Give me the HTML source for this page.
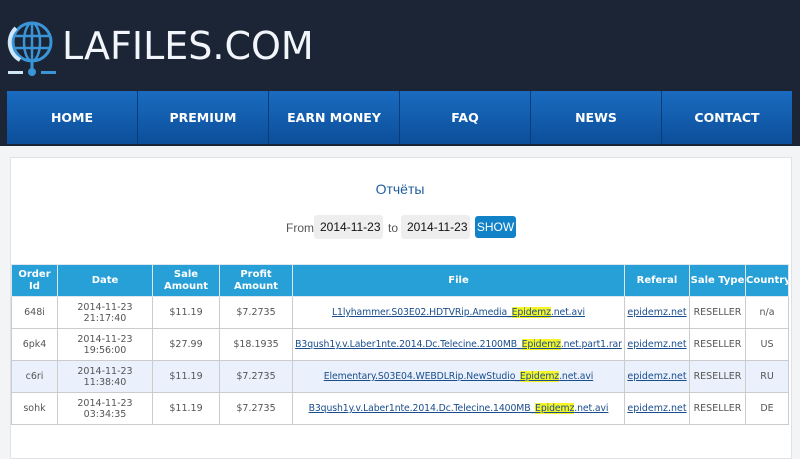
<!DOCTYPE html>
<html><head><meta charset="utf-8"><style>
body{margin:0;width:800px;height:444px;overflow:hidden;background:#f2f4f6;font-family:"DejaVu Sans",Verdana,sans-serif;}
.hdr{position:absolute;left:0;top:0;width:800px;height:146px;background:#1b2535;}
.logo{position:absolute;left:62px;top:24px;font-family:"DejaVu Sans",sans-serif;font-size:38px;color:#f2f6fa;letter-spacing:0px;font-weight:normal;}
.nav{position:absolute;left:7px;top:91px;width:785px;height:53px;background:linear-gradient(#1a6bc0,#0c4f9a);display:flex;}
.nav div{flex:1;border-right:1px solid #0a3c78;color:#fff;font-weight:bold;font-size:12.5px;text-align:center;line-height:53px;}
.nav div:last-child{border-right:none}
.panel{position:absolute;left:10px;top:157px;width:780px;height:300px;background:#fff;border:1px solid #dde2e8;}
.title{position:absolute;left:0;width:800px;top:181px;text-align:center;color:#1f5f9e;font-family:"Liberation Sans",sans-serif;font-size:14px;}
.form{position:absolute;top:215px;left:286px;font-family:"Liberation Sans",sans-serif;font-size:12px;color:#555;}
.form span{position:absolute;top:6px}
.inp{position:absolute;top:0;width:69px;height:24px;background:#eee;border-radius:3px;color:#111;line-height:24px;padding-left:6px;box-sizing:border-box;font-size:12px}
.btn{position:absolute;left:189px;top:1px;width:41px;height:22px;background:#1282c8;color:#fff;border-radius:3px;text-align:center;line-height:22px;font-size:12px}
table{position:absolute;left:11px;top:264px;border-collapse:collapse;font-size:9.5px;color:#555;table-layout:fixed;width:777px}
th{background:#27a0d8;color:#fff;font-size:10px;height:31px;border:1px solid #dfe6ee;padding:0;line-height:12px;white-space:nowrap;overflow:hidden}
td{border:1px solid #ccc;height:31px;text-align:center;padding:0;line-height:11px;white-space:nowrap;overflow:hidden}
td.f{font-size:9.3px;letter-spacing:-0.1px}
tr.alt td{background:#eaf1fc}
a{color:#1a4d8c;text-decoration:underline}
.hl{background:#f5f52a}
</style></head><body>
<div class="hdr">
<svg style="position:absolute;left:6px;top:16px" width="52" height="62" viewBox="0 0 52 62">
<circle cx="26" cy="26" r="19" fill="none" stroke="#3a95d8" stroke-width="3"/>
<ellipse cx="26" cy="26" rx="8" ry="19" fill="none" stroke="#3a95d8" stroke-width="2.5"/>
<line x1="26" y1="7" x2="26" y2="45" stroke="#3a95d8" stroke-width="2.5"/>
<line x1="7" y1="20" x2="45" y2="20" stroke="#3a95d8" stroke-width="2.5"/>
<line x1="7" y1="32" x2="45" y2="32" stroke="#3a95d8" stroke-width="2.5"/>
<path d="M10 12 A20 20 0 0 0 14 44" fill="none" stroke="#cfe6f8" stroke-width="4"/>
<line x1="26" y1="45" x2="26" y2="53" stroke="#3a95d8" stroke-width="3"/>
<circle cx="26" cy="56" r="4" fill="#3a95d8"/>
<rect x="2" y="55" width="15" height="3" fill="#cfe6f8"/><rect x="35" y="55" width="15" height="3" fill="#3a95d8"/>
</svg>
<div class="logo">LAFILES.COM</div>
<div class="nav"><div>HOME</div><div>PREMIUM</div><div>EARN MONEY</div><div>FAQ</div><div>NEWS</div><div>CONTACT</div></div>
</div>
<div class="panel"></div>
<div class="title">Отчёты</div>
<div class="form"><span style="left:0">From</span><div class="inp" style="left:28px">2014-11-23</div><span style="left:102px">to</span><div class="inp" style="left:115px">2014-11-23</div><div class="btn">SHOW</div></div>
<table>
<colgroup><col style="width:46px"><col style="width:95px"><col style="width:67px"><col style="width:73px"><col style="width:332px"><col style="width:65px"><col style="width:56px"><col style="width:43px"></colgroup>
<tr><th>Order<br>Id</th><th>Date</th><th>Sale<br>Amount</th><th>Profit<br>Amount</th><th>File</th><th>Referal</th><th>Sale Type</th><th>Country</th></tr>
<tr><td>648i</td><td>2014-11-23<br>21:17:40</td><td>$11.19</td><td>$7.2735</td><td class="f"><a>L1lyhammer.S03E02.HDTVRip.Amedia_<span class="hl">Epidemz</span>.net.avi</a></td><td><a>epidemz.net</a></td><td>RESELLER</td><td>n/a</td></tr>
<tr><td>6pk4</td><td>2014-11-23<br>19:56:00</td><td>$27.99</td><td>$18.1935</td><td class="f"><a>B3qush1y.v.Laber1nte.2014.Dc.Telecine.2100MB_<span class="hl">Epidemz</span>.net.part1.rar</a></td><td><a>epidemz.net</a></td><td>RESELLER</td><td>US</td></tr>
<tr class="alt"><td>c6ri</td><td>2014-11-23<br>11:38:40</td><td>$11.19</td><td>$7.2735</td><td class="f"><a>Elementary.S03E04.WEBDLRip.NewStudio_<span class="hl">Epidemz</span>.net.avi</a></td><td><a>epidemz.net</a></td><td>RESELLER</td><td>RU</td></tr>
<tr><td>sohk</td><td>2014-11-23<br>03:34:35</td><td>$11.19</td><td>$7.2735</td><td class="f"><a>B3qush1y.v.Laber1nte.2014.Dc.Telecine.1400MB_<span class="hl">Epidemz</span>.net.avi</a></td><td><a>epidemz.net</a></td><td>RESELLER</td><td>DE</td></tr>
</table>
</body></html>
